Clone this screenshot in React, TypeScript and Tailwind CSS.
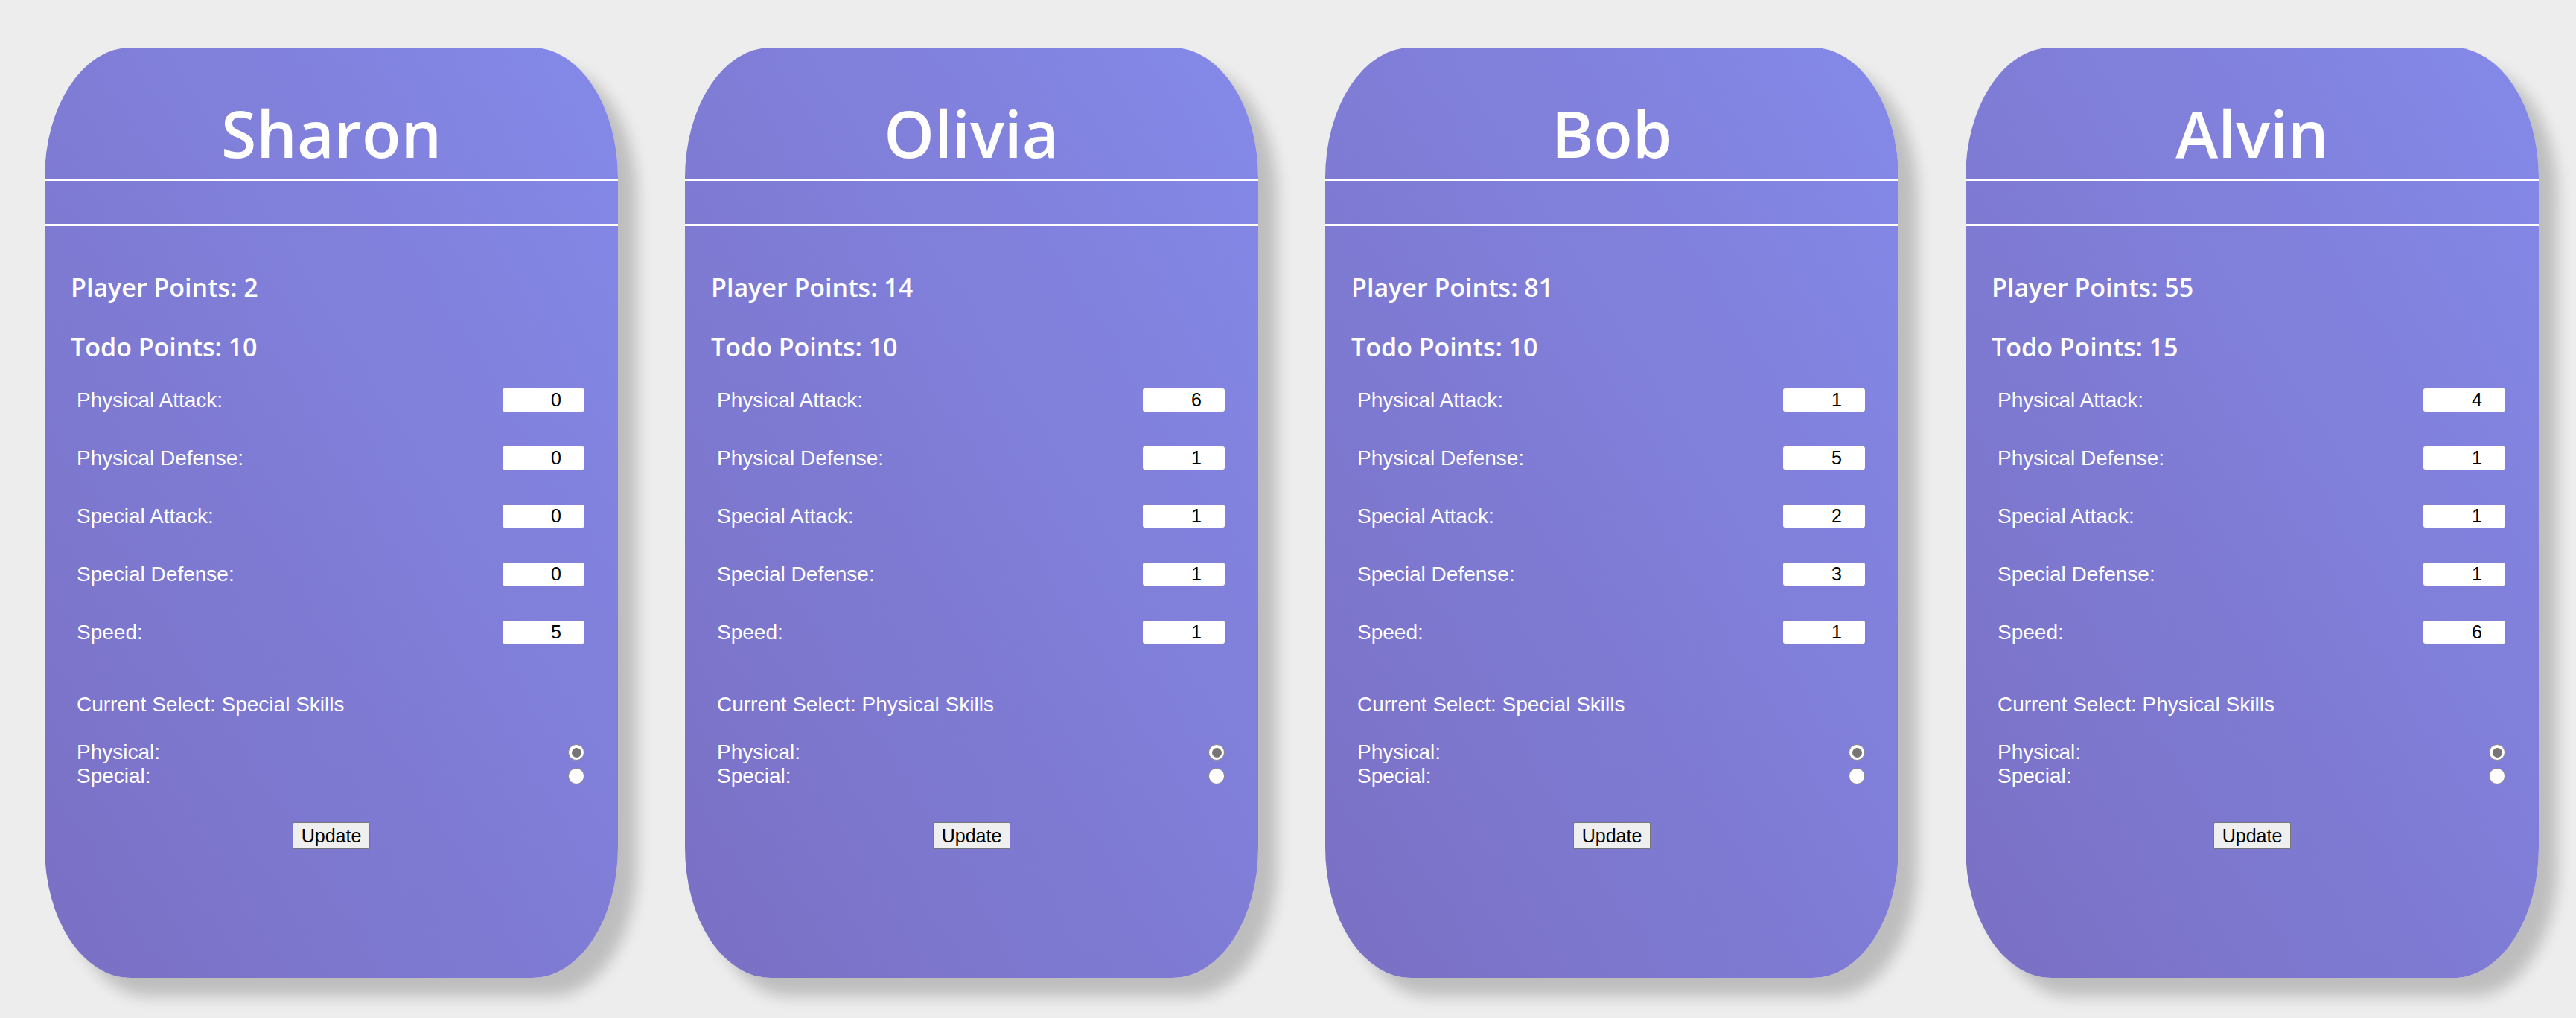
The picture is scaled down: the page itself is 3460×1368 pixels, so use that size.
const players = [
  { name: 'Sharon', points: 2, todo: 10, stats: [0, 0, 0, 0, 5], select: 'Special Skills' },
  { name: 'Olivia', points: 14, todo: 10, stats: [6, 1, 1, 1, 1], select: 'Physical Skills' },
  { name: 'Bob', points: 81, todo: 10, stats: [1, 5, 2, 3, 1], select: 'Special Skills' },
  { name: 'Alvin', points: 55, todo: 15, stats: [4, 1, 1, 1, 6], select: 'Physical Skills' },
];

const statLabels = ['Physical Attack:', 'Physical Defense:', 'Special Attack:', 'Special Defense:', 'Speed:'];

function Radio({ checked }: { checked: boolean }) {
  return (
    <div className="w-[22px] h-[22px] rounded-full bg-white border border-[#8a8a8a] flex items-center justify-center">
      {checked && <div className="w-[13px] h-[13px] rounded-full bg-[#767676]" />}
    </div>
  );
}

interface Player {
  name: string;
  points: number;
  todo: number;
  stats: number[];
  select: string;
}

function PlayerCard({ player }: { player: Player }) {
  return (
    <div className="w-[770px] h-[1250px] shrink-0 rounded-[115px_/_175px] bg-gradient-to-tr from-[#7a70c4] to-[#8489e8] shadow-[25px_25px_20px_rgba(0,0,0,0.2)] pt-[56px] flex flex-col text-white">
      <h1 className="font-['Open_Sans',sans-serif] font-semibold text-[86px] leading-[117px] text-center">
        {player.name}
      </h1>
      <div className="mt-[3px] h-[3px] bg-white" />
      <div className="mt-[58px] h-[3px] bg-white" />

      <div className="px-[35px] font-['Open_Sans',sans-serif] font-semibold text-[34px] leading-[46px]">
        <p className="mt-[59px]">Player Points: {player.points}</p>
        <p className="mt-[34px]">Todo Points: {player.todo}</p>
      </div>

      <div className="mt-[33px] pl-[43px] pr-[45px] font-['Liberation_Sans',Arial,sans-serif] text-[28px] flex flex-col gap-[47px]">
        {statLabels.map((label, i) => (
          <div key={label} className="h-[31px] flex items-center justify-between">
            <span className="leading-[32px]">{label}</span>
            <div className="w-[110px] h-[31px] rounded-[3px] bg-white text-black text-[25px] leading-[31px] text-right pr-[31px]">
              {player.stats[i]}
            </div>
          </div>
        ))}
      </div>

      <div className="pl-[43px] pr-[45px] font-['Liberation_Sans',Arial,sans-serif] text-[28px] leading-[32px]">
        <p className="mt-[66px]">Current Select: {player.select}</p>
        <div className="mt-[32px] flex items-center justify-between h-[32px]">
          <span>Physical:</span>
          <Radio checked />
        </div>
        <div className="flex items-center justify-between h-[32px]">
          <span>Special:</span>
          <Radio checked={false} />
        </div>
      </div>

      <div className="mt-[46px] flex justify-center">
        <button className="h-[36px] px-[11px] bg-[#efefef] border border-[#767676] rounded-[2px] text-black font-['Liberation_Sans',Arial,sans-serif] text-[25px] leading-[34px]">
          Update
        </button>
      </div>
    </div>
  );
}

export default function App() {
  return (
    <div className="min-h-[1368px] w-full bg-[#ededed] pt-[64px] pl-[60px] flex gap-[90px]">
      {players.map(p => (
        <PlayerCard key={p.name} player={p} />
      ))}
    </div>
  );
}
